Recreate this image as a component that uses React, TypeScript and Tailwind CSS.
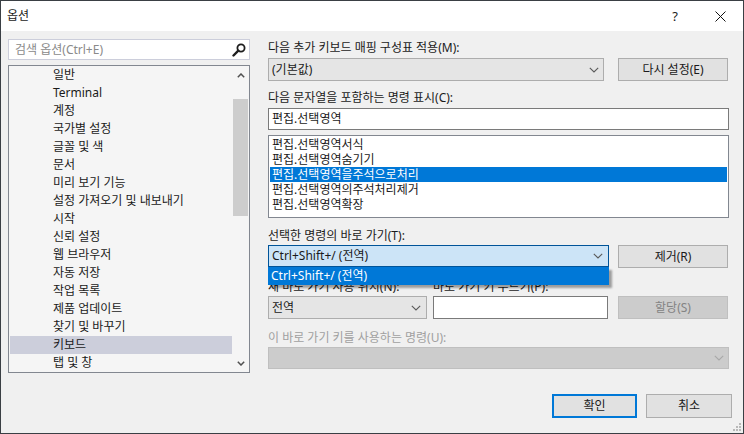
import React from "react";

const Chevron = ({ color = "#5a5a5a" }: { color?: string }) => (
  <svg width="10" height="6" viewBox="0 0 10 6" className="shrink-0">
    <path d="M0.8 0.8 L5 5 L9.2 0.8" fill="none" stroke={color} strokeWidth="1.1" />
  </svg>
);

const treeItems = [
  "일반",
  "Terminal",
  "계정",
  "국가별 설정",
  "글꼴 및 색",
  "문서",
  "미리 보기 기능",
  "설정 가져오기 및 내보내기",
  "시작",
  "신뢰 설정",
  "웹 브라우저",
  "자동 저장",
  "작업 목록",
  "제품 업데이트",
  "찾기 및 바꾸기",
  "키보드",
  "탭 및 창",
];

const cmdItems = [
  "편집.선택영역서식",
  "편집.선택영역숨기기",
  "편집.선택영역을주석으로처리",
  "편집.선택영역의주석처리제거",
  "편집.선택영역확장",
];

export default function App() {
  return (
    <div className="relative w-[744px] h-[434px] border border-[#3a3f44] bg-[#f0f0f0] flex flex-col overflow-hidden font-['Noto_Sans','Noto_Sans_CJK_KR',sans-serif] text-[12px] text-[#1a1a1a]">
      {/* Title bar */}
      <div className="h-[30px] bg-white flex items-center pl-[6px] shrink-0">
        <span className="text-[12px] leading-[16px]">옵션</span>
        <div className="flex-1" />
        <span className="text-[13px] leading-[16px] mr-[37px]">?</span>
        <svg width="11" height="11" viewBox="0 0 11 11" className="mr-[17px]">
          <path d="M0.5 0.5 L10.5 10.5 M10.5 0.5 L0.5 10.5" stroke="#111" strokeWidth="1" />
        </svg>
      </div>

      {/* Body */}
      <div className="flex-1 flex flex-col pl-[7px] pt-[8px]">
        <div className="flex h-[334px]">
          {/* Left column */}
          <div className="w-[242px] flex flex-col">
            <div className="h-[21px] bg-white border border-[#cccedb] flex items-center pl-[6px] pr-[3px]">
              <span className="text-[#8a8a8a] leading-[16px] flex-1">검색 옵션(Ctrl+E)</span>
              <svg width="14" height="14" viewBox="0 0 14 14">
                <circle cx="9" cy="5" r="3.6" fill="none" stroke="#1e1e1e" strokeWidth="1.8" />
                <path d="M6.3 7.7 L1.5 12.5" stroke="#1e1e1e" strokeWidth="2.4" strokeLinecap="round" />
              </svg>
            </div>
            <div className="mt-[5px] h-[308px] border border-[#828790] bg-[#f5f5f5] flex">
              <div className="flex-1 flex flex-col pl-[1px]">
                {treeItems.map((t) => (
                  <div
                    key={t}
                    className={`h-[18px] flex items-center pl-[43px] leading-[16px] ${
                      t === "키보드" ? "bg-[#cccedb]" : ""
                    }`}
                  >
                    {t}
                  </div>
                ))}
              </div>
              <div className="w-[17px] flex flex-col items-center">
                <div className="h-[18px] flex items-center justify-center">
                  <svg width="8" height="5" viewBox="0 0 8 5">
                    <path d="M0.8 4.2 L4 1 L7.2 4.2" fill="none" stroke="#505050" strokeWidth="1.5" />
                  </svg>
                </div>
                <div className="mt-[15px] h-[117px] w-[15px] bg-[#cdcdcd]" />
                <div className="flex-1" />
                <div className="h-[18px] flex items-center justify-center">
                  <svg width="8" height="5" viewBox="0 0 8 5">
                    <path d="M0.8 0.8 L4 4 L7.2 0.8" fill="none" stroke="#505050" strokeWidth="1.5" />
                  </svg>
                </div>
              </div>
            </div>
          </div>

          {/* Right column */}
          <div className="ml-[18px] w-[461px] flex flex-col">
            <div className="h-[17px] leading-[17px]">다음 추가 키보드 매핑 구성표 적용(M):</div>
            <div className="mt-[2px] flex h-[23px]">
              <div className="w-[336px] h-full bg-[#e5e5e5] border border-[#adadad] flex items-center pl-[3px] pr-[4px]">
                <span className="flex-1 leading-[16px]">(기본값)</span>
                <Chevron />
              </div>
              <div className="ml-[14px] w-[110px] h-full bg-[#e1e1e1] border border-[#adadad] flex items-center justify-center leading-[16px]">
                다시 설정(E)
              </div>
            </div>

            <div className="mt-[8px] h-[17px] leading-[17px]">다음 문자열을 포함하는 명령 표시(C):</div>
            <div className="mt-[2px] h-[22px] bg-white border border-[#7a7a7a] flex items-center pl-[3px] leading-[16px]">
              편집.선택영역
            </div>

            <div className="mt-[5px] h-[83px] bg-white border border-[#828790] p-[1px] flex flex-col">
              {cmdItems.map((c, i) => (
                <div
                  key={c}
                  className={`h-[15px] flex items-center pl-[2px] leading-[15px] ${
                    i === 2 ? "bg-[#0078d7] text-white" : ""
                  }`}
                >
                  {c}
                </div>
              ))}
            </div>

            <div className="mt-[9px] h-[17px] leading-[17px]">선택한 명령의 바로 가기(T):</div>
            <div className="mt-[1px] flex h-[22px]">
              <div className="relative w-[341px] h-full">
                <div className="h-full bg-[#cce4f7] border border-[#005499] flex items-center pl-[3px] pr-[5px]">
                  <span className="flex-1 leading-[16px]">Ctrl+Shift+/ (전역)</span>
                  <Chevron />
                </div>
                <div className="absolute z-10 left-0 top-full w-[341px] h-[18px] bg-[#0078d7] text-white flex items-center pl-[3px] leading-[16px] shadow-[3px_3px_2px_rgba(0,0,0,0.35)]">
                  Ctrl+Shift+/ (전역)
                </div>
              </div>
              <div className="ml-[9px] w-[110px] h-[23px] bg-[#e1e1e1] border border-[#adadad] flex items-center justify-center leading-[16px]">
                제거(R)
              </div>
            </div>

            <div className="mt-[11px] h-[17px] leading-[17px] flex">
              <span className="w-[165px]">새 바로 가기 사용 위치(N):</span>
              <span>바로 가기 키 누르기(P):</span>
            </div>
            <div className="mt-[1px] flex h-[23px]">
              <div className="w-[159px] h-full bg-[#e5e5e5] border border-[#adadad] flex items-center pl-[3px] pr-[5px]">
                <span className="flex-1 leading-[16px]">전역</span>
                <Chevron />
              </div>
              <div className="ml-[6px] w-[175px] h-full bg-white border border-[#7a7a7a]" />
              <div className="ml-[10px] w-[110px] h-full bg-[#cccccc] border border-[#bfbfbf] text-[#838383] flex items-center justify-center leading-[16px]">
                할당(S)
              </div>
            </div>

            <div className="mt-[10px] h-[17px] leading-[17px] text-[#a0a0a0]">이 바로 가기 키를 사용하는 명령(U):</div>
            <div className="mt-[1px] h-[22px] bg-[#cccccc] border border-[#bfbfbf] flex items-center justify-end pr-[4px]">
              <Chevron color="#a8a8a8" />
            </div>
          </div>
        </div>

        {/* Footer */}
        <div className="mt-[21px] flex justify-end pr-[11px]">
          <div className="w-[85px] h-[24px] bg-[#e1e1e1] border-2 border-[#0078d7] flex items-center justify-center leading-[16px]">
            확인
          </div>
          <div className="ml-[9px] w-[86px] h-[24px] bg-[#e1e1e1] border border-[#adadad] flex items-center justify-center leading-[16px]">
            취소
          </div>
        </div>
      </div>

      {/* Resize grip */}
      <svg width="8" height="8" viewBox="0 0 8 8" className="absolute right-[2px] bottom-[2px]">
        <rect x="6" y="0" width="2" height="2" fill="#b8b8b8" />
        <rect x="3" y="3" width="2" height="2" fill="#b8b8b8" />
        <rect x="6" y="3" width="2" height="2" fill="#b8b8b8" />
        <rect x="0" y="6" width="2" height="2" fill="#b8b8b8" />
        <rect x="3" y="6" width="2" height="2" fill="#b8b8b8" />
        <rect x="6" y="6" width="2" height="2" fill="#b8b8b8" />
      </svg>
    </div>
  );
}
